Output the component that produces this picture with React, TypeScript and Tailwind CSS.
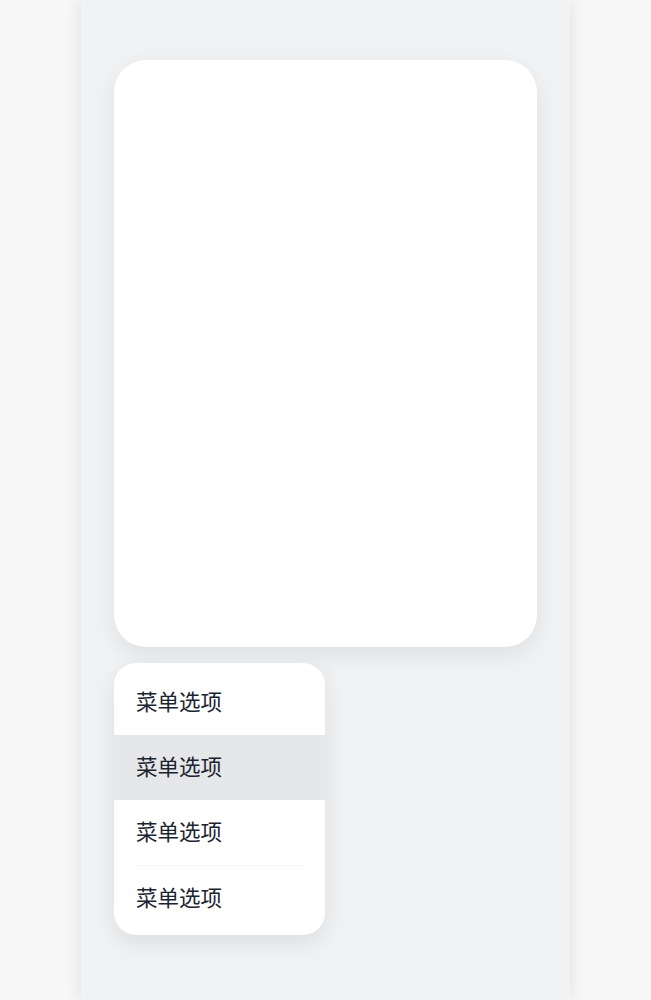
import React from 'react';

const items = ['菜单选项', '菜单选项', '菜单选项', '菜单选项'];

export default function App() {
  return (
    <div
      className="min-h-screen bg-[#f7f7f7] flex justify-center"
      style={{ fontFamily: '"Noto Sans", "Noto Sans CJK SC", sans-serif' }}
    >
      <div className="w-[489px] min-h-[1000px] bg-[#f1f2f4] shadow-[0_0_16px_rgba(0,0,0,0.1)] px-[33px] pt-[60px]">
        {/* big card */}
        <div className="h-[587px] bg-white rounded-[32px] shadow-[0_8px_24px_rgba(0,0,0,0.08)]" />

        {/* dropdown menu */}
        <div className="mt-[16px] w-[211px] bg-white rounded-[22px] pt-[7px] pb-[4px] shadow-[0_8px_24px_rgba(0,0,0,0.09)] overflow-hidden">
          {items.map((label, i) => (
            <div key={i}>
              {i === 3 && <div className="mx-[22px] h-px bg-[#f5f6f7]" />}
              <div
                className={
                  'h-[65px] px-[22px] flex items-center text-[21.5px] text-[#1c2430] ' +
                  (i === 1 ? 'bg-[#e6e7e9]' : '')
                }
              >
                {label}
              </div>
            </div>
          ))}
        </div>
      </div>
    </div>
  );
}
